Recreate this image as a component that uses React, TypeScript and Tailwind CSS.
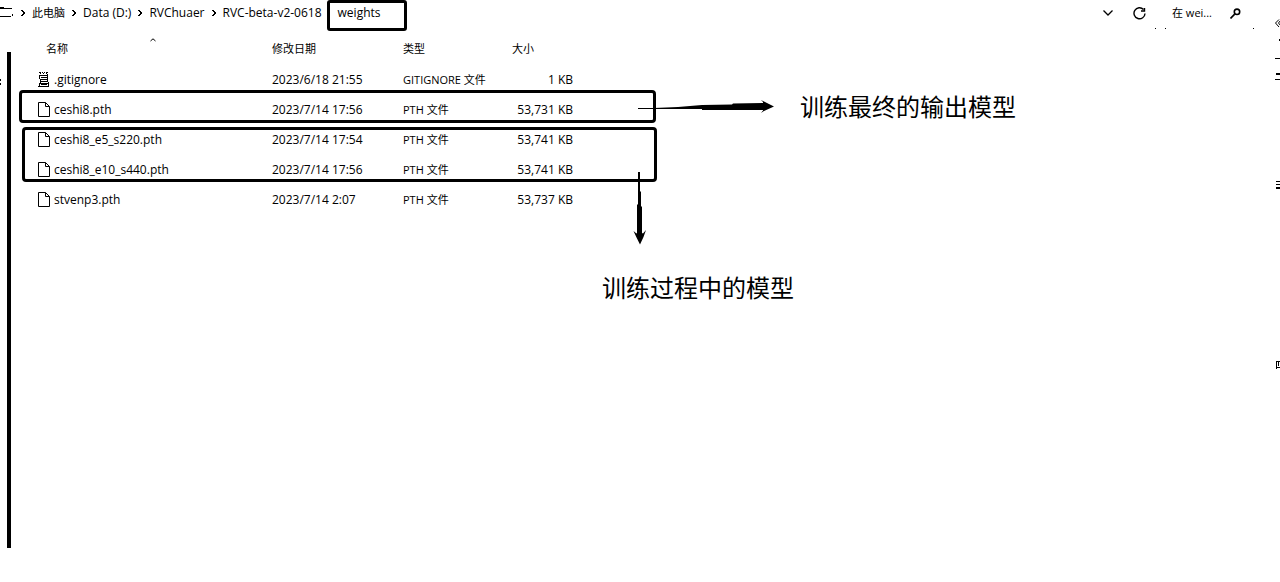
import React from "react";

type FileRow = { name: string; modified: string; type: string; size: string; kind: "text" | "blank" };

const files: FileRow[] = [
  { name: ".gitignore", modified: "2023/6/18 21:55", type: "GITIGNORE 文件", size: "1 KB", kind: "text" },
  { name: "ceshi8.pth", modified: "2023/7/14 17:56", type: "PTH 文件", size: "53,731 KB", kind: "blank" },
  { name: "ceshi8_e5_s220.pth", modified: "2023/7/14 17:54", type: "PTH 文件", size: "53,741 KB", kind: "blank" },
  { name: "ceshi8_e10_s440.pth", modified: "2023/7/14 17:56", type: "PTH 文件", size: "53,741 KB", kind: "blank" },
  { name: "stvenp3.pth", modified: "2023/7/14 2:07", type: "PTH 文件", size: "53,737 KB", kind: "blank" },
];

const crumbs = ["此电脑", "Data (D:)", "RVChuaer", "RVC-beta-v2-0618"];

function Chevron() {
  return (
    <svg width="4" height="6" viewBox="0 0 4 6" className="shrink-0" shapeRendering="crispEdges" aria-hidden="true">
      <path d="M0 0h2v1h1v1h1v2h-1v1h-1v1h-2v-1h1v-1h1v-2h-1v-1h-1z" />
    </svg>
  );
}

function FileIcon({ kind }: { kind: FileRow["kind"] }) {
  if (kind === "text") {
    return (
      <svg width="12" height="16" viewBox="0 0 12 16" fill="none" stroke="black" className="shrink-0" shapeRendering="crispEdges" aria-hidden="true">
        <path d="M1 .5h2M4 .5h1M6 .5h1M8 .5h2M2 1.5h1M5 1.5h1M8 1.5h1M1.500 3v4M9.500 2v8M1 3.5h9M3 5.5h6M2 7.5h7M3 9.5h6M2.500 7v5M2 11.5h8M1.500 11v3M10.500 10v4M3 12.500h6M0 14.5h11" />
      </svg>
    );
  }
  return (
    <svg width="12" height="16" viewBox="0 0 12 16" fill="none" stroke="black" className="shrink-0" aria-hidden="true">
      <path d="M.5 .5h7l4 4v10h-11zM7.5 .5v4h4" />
    </svg>
  );
}

export default function App() {
  return (
    <div className="relative flex min-h-screen flex-col overflow-hidden bg-white font-['Open_Sans','Noto_Sans_CJK_SC',sans-serif] text-[12px] leading-4 font-normal text-black">
      <header className="flex h-[31px] items-start">
        <nav aria-label="Path" className="flex items-start">
          <svg width="13" height="12" viewBox="0 0 13 12" className="mt-[7px] mr-2 shrink-0" fill="none" stroke="black" shapeRendering="crispEdges" aria-hidden="true">
            <path d="M0 .5h4M0 1.5h12M0 9.5h11M12.5 7v2" />
          </svg>
          <ol className="flex h-[26px] items-center gap-[7px]">
            {crumbs.map((c) => (
              <li key={c} className="flex items-center gap-[7px] whitespace-nowrap first:text-[11px]">
                <Chevron />
                <a href="#">{c}</a>
              </li>
            ))}
          </ol>
          <a href="#" aria-current="page" className="ml-[5px] h-[31px] w-20 rounded-[3px] border-[3px] border-black pt-0.5 pl-2">
            weights
          </a>
        </nav>
        <div className="mr-[39px] ml-auto flex h-[26px] items-center">
          <button type="button" aria-label="History" className="mr-5">
            <svg width="10" height="6" viewBox="0 0 10 6" fill="none" stroke="black" strokeWidth="1.3"><path d="M.5.5 5 5 9.500.5" /></svg>
          </button>
          <button type="button" aria-label="Refresh" className="mr-[26px]">
            <svg width="13" height="13" viewBox="0 0 13 13" fill="none" stroke="black" strokeWidth="1.4">
              <path d="M10.500 2.500A5.500 5.500 0 1 0 12 6.500M11.500 1v3h-3.500" />
            </svg>
          </button>
          <input aria-label="Search weights" placeholder="在 wei..." className="w-[48px] bg-transparent p-0 text-[11px] placeholder:text-black placeholder:opacity-100" />
          <button type="button" aria-label="Search" className="ml-2.5">
            <svg width="11" height="11" viewBox="0 0 11 11" fill="none" stroke="black" strokeWidth="1.6">
              <circle cx="7" cy="3.800" r="2.700" /><path d="M4.700 6.100.5 10.500" />
            </svg>
          </button>
        </div>
      </header>

      <main className="flex">
        <div className="mt-[21px] ml-[7px] h-[496px] w-1 shrink-0 bg-black" />
        <div className="relative ml-[27px] self-start">
          <table className="table-fixed border-collapse text-left">
            <colgroup>
              <col className="w-[234px]" />
              <col className="w-[131px]" />
              <col className="w-[109px]" />
              <col className="w-[61px]" />
            </colgroup>
            <thead>
              <tr className="h-[34px] text-[11px]">
                <th className="relative p-0 pt-0.5 pl-2 font-normal">
                  名称
                  <svg width="6" height="4" viewBox="0 0 6 4" fill="none" stroke="black" className="absolute top-[7px] left-28" aria-hidden="true"><path d="M.5 3 3 .8 5.500 3" /></svg>
                </th>
                <th className="p-0 pt-0.5 font-normal">修改日期</th>
                <th className="p-0 pt-0.5 font-normal">类型</th>
                <th className="p-0 pt-0.5 font-normal">大小</th>
              </tr>
            </thead>
            <tbody>
              {files.map((f) => (
                <tr key={f.name} className="h-[30px] whitespace-nowrap">
                  <td className="p-0"><span className="flex items-center gap-1"><FileIcon kind={f.kind} />{f.name}</span></td>
                  <td className="p-0">{f.modified}</td>
                  <td className="p-0 text-[11px]">{f.type}</td>
                  <td className="p-0 text-right">{f.size}</td>
                </tr>
              ))}
            </tbody>
          </table>
        </div>
      </main>

      <div className="pointer-events-none absolute top-[90px] left-[19px] h-[33px] w-[637px] rounded-[4px] border-[3px] border-black" />
      <div className="pointer-events-none absolute top-[127px] left-[22px] h-[55px] w-[635px] rounded-[4px] border-[3px] border-black" />
      <svg width="137" height="14" viewBox="0 0 137 14" className="absolute top-[100px] left-[638px]" aria-hidden="true">
        <path d="M0 8h16l24-1 24-2 30-.5 1-1 30-.5V2l-2-2 3 1.500 10 5-10 4.500-3 2 2-2.500v-.5H64V9H16L0 9z" />
      </svg>
      <svg width="14" height="73" viewBox="0 0 14 73" className="absolute top-[172px] left-[633px]" aria-hidden="true">
        <path d="M5 0h2v19l1 1v14l1 1v26l1 .5 3-3.500-2.500 7L7 72.500l-3.500-7L.5 59l3 2.500.5-.5V33l1-1z" />
      </svg>
      <p className="absolute top-[91px] left-[800px] text-2xl font-normal whitespace-nowrap">训练最终的输出模型</p>
      <p className="absolute top-[272px] left-[602px] text-2xl font-normal whitespace-nowrap">训练过程中的模型</p>

      <svg width="2" height="8" viewBox="0 0 2 8" className="absolute top-[78px] left-0" shapeRendering="crispEdges" aria-hidden="true"><path d="M0 1h1v2H0zM0 5h1v2H0z" /></svg>
      <svg width="126" height="352" viewBox="0 0 126 352" className="absolute top-[19px] right-0" aria-hidden="true">
        <path shapeRendering="crispEdges" d="M1 9h1v1H1zM11 9h1v1h-1zM99 9h1v1h-1zM125 20h1v2h-1zM121 39h5v1h-5zM122 54h4v2h-4zM121 60h5v1h-5zM122 162h4v1h-4zM122 165h4v1h-4zM122 168h4v2h-4zM122 342h4v1h-4zM122 343h1v7h-1zM124 343h1v4h-1zM123 348h3v1h-3z" />
        <path d="M125 .5l-3.500 3.500 3.500 4M126.500 1.500l-2 2.500 2 2.500" fill="none" stroke="black" />
      </svg>
    </div>
  );
}
